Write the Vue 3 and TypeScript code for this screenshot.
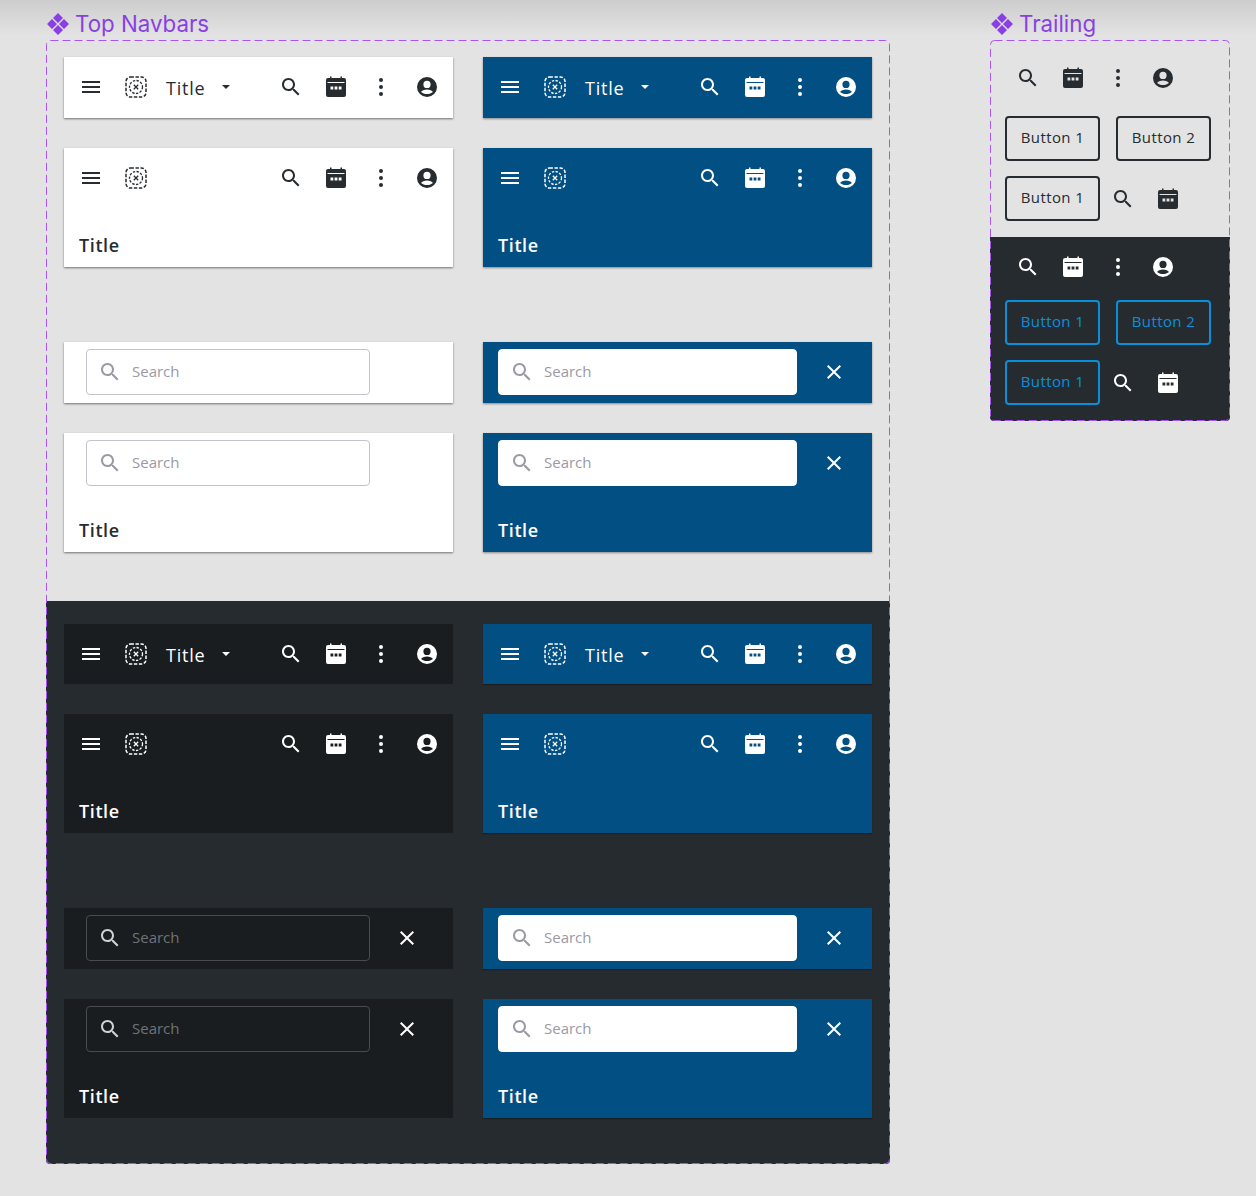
<script setup lang="ts">
import { h } from 'vue'

type IconName = 'menu' | 'search' | 'calendar' | 'dots' | 'account' | 'close'
type Theme = 'light' | 'blue' | 'dark'
interface Bar {
  theme: Theme
  tall?: boolean
  search?: boolean
  close?: boolean
  dropdown?: boolean
  short?: boolean
}

const paths: Record<IconName, string> = {
  menu: 'M3 18h18v-2H3v2zm0-5h18v-2H3v2zm0-7v2h18V6H3z',
  search:
    'M15.5 14h-.79l-.28-.27C15.41 12.59 16 11.11 16 9.5 16 5.91 13.09 3 9.5 3S3 5.91 3 9.5 5.91 16 9.5 16c1.61 0 3.09-.59 4.23-1.57l.27.28v.79l5 4.99L20.49 19l-4.99-5zm-6 0C7.01 14 5 11.99 5 9.5S7.01 5 9.5 5 14 7.01 14 9.5 11.99 14 9.5 14z',
  calendar:
    'M4 3h2V1.5h1.5V3h9V1.5H18V3h2a2 2 0 0 1 2 2v15a2 2 0 0 1-2 2H4a2 2 0 0 1-2-2V5a2 2 0 0 1 2-2zM3.5 7v.9h17V7zM6.5 11.5v3h2.8v-3zM10.6 11.5v3h2.8v-3zM14.7 11.5v3h2.8v-3z',
  dots: 'M12 3a2 2 0 1 1 0 4 2 2 0 0 1 0-4zM12 10a2 2 0 1 1 0 4 2 2 0 0 1 0-4zM12 17a2 2 0 1 1 0 4 2 2 0 0 1 0-4z',
  account:
    'M12 2a10 10 0 1 1 0 20 10 10 0 0 1 0-20zM12 5.8a3.6 3.6 0 1 0 0 7.2 3.6 3.6 0 0 0 0-7.2zM12 14.6c-2.6 0-5.2 1-5.9 2.4 1.4 1.3 3.5 2.1 5.9 2.1s4.5-.8 5.9-2.1c-.7-1.4-3.3-2.4-5.9-2.4z',
  close:
    'M19 6.41L17.59 5 12 10.59 6.41 5 5 6.41 10.59 12 5 17.59 6.41 19 12 13.41 17.59 19 19 17.59 13.41 12z',
}

const Icon = (props: { name: IconName }) =>
  h('svg', { width: 24, height: 24, viewBox: '0 0 24 24', fill: 'currentColor', style: 'flex:none;display:block' }, [
    h('path', { d: paths[props.name], 'fill-rule': 'evenodd' }),
  ])
Icon.props = ['name']

const Placeholder = () =>
  h('svg', { width: 24, height: 24, viewBox: '0 0 24 24', fill: 'none', stroke: 'currentColor', style: 'flex:none;display:block' }, [
    h('rect', { x: 2, y: 2, width: 20, height: 20, rx: 4.5, 'stroke-width': 1.5, 'stroke-dasharray': '3.4 1.6' }),
    h('circle', { cx: 12, cy: 12, r: 6.5, 'stroke-width': 1.3, 'stroke-dasharray': '2.4 1.4' }),
    h('path', { d: 'M9.8 9.8l4.4 4.4M14.2 9.8l-4.4 4.4', 'stroke-width': 1.3 }),
  ])

const groups: Bar[][][] = [
  [
    [
      [
        { theme: 'light', dropdown: true },
        { theme: 'blue', dropdown: true },
      ],
      [
        { theme: 'light', tall: true },
        { theme: 'blue', tall: true },
      ],
    ],
    [
      [
        { theme: 'light', search: true },
        { theme: 'blue', search: true, close: true },
      ],
      [
        { theme: 'light', search: true, tall: true },
        { theme: 'blue', search: true, close: true, tall: true },
      ],
    ],
  ],
  [
    [
      [
        { theme: 'dark', dropdown: true, short: true },
        { theme: 'blue', dropdown: true, short: true },
      ],
      [
        { theme: 'dark', tall: true },
        { theme: 'blue', tall: true },
      ],
    ],
    [
      [
        { theme: 'dark', search: true, close: true },
        { theme: 'blue', search: true, close: true },
      ],
      [
        { theme: 'dark', search: true, close: true, tall: true },
        { theme: 'blue', search: true, close: true, tall: true },
      ],
    ],
  ],
] as Bar[][][]

const actions: IconName[] = ['search', 'calendar', 'dots', 'account']
const trailing = ['trail-light', 'trail-dark']
</script>

<template>
  <div class="page">
    <section class="left">
      <header class="head">
        <svg class="diamonds" width="22" height="22" viewBox="0 0 22 22" fill="currentColor">
          <path d="M11 0l5 5-5 5-5-5zM5 6l5 5-5 5-5-5zM17 6l5 5-5 5-5-5zM11 12l5 5-5 5-5-5z" />
        </svg>
        <span>Top Navbars</span>
      </header>
      <div class="panel main-panel">
        <div
          v-for="(section, s) in groups"
          :key="s"
          class="section"
          :class="s === 0 ? 'section-light' : 'section-dark'"
        >
          <div v-for="(group, g) in section" :key="g" class="group">
            <template v-for="(row, r) in group" :key="r">
              <div
                v-for="(bar, b) in row"
                :key="b"
                class="bar"
                :class="[bar.theme, { tall: bar.tall, short: bar.short }]"
              >
                <div v-if="bar.search" class="row" :class="{ 'row-inset': bar.theme !== 'blue' }">
                  <div class="field">
                    <Icon name="search" />
                    <span>Search</span>
                  </div>
                  <Icon v-if="bar.close" name="close" class="close" />
                </div>
                <div v-else class="row">
                  <Icon name="menu" />
                  <Placeholder class="logo" />
                  <template v-if="bar.dropdown">
                    <span class="inline-title">Title</span>
                    <span class="caret"></span>
                  </template>
                  <div class="actions">
                    <Icon v-for="a in actions" :key="a" :name="a" />
                  </div>
                </div>
                <div v-if="bar.tall" class="big-title">Title</div>
              </div>
            </template>
          </div>
        </div>
        <svg class="outline" width="844" height="1124" viewBox="0 0 844 1124" fill="none">
          <rect x="0.5" y="0.5" width="843" height="1123" rx="4" />
        </svg>
      </div>
    </section>

    <section class="right">
      <header class="head">
        <svg class="diamonds" width="22" height="22" viewBox="0 0 22 22" fill="currentColor">
          <path d="M11 0l5 5-5 5-5-5zM5 6l5 5-5 5-5-5zM17 6l5 5-5 5-5-5zM11 12l5 5-5 5-5-5z" />
        </svg>
        <span>Trailing</span>
      </header>
      <div class="panel side-panel">
        <div v-for="t in trailing" :key="t" class="trail" :class="t">
          <div class="trail-icons">
            <Icon v-for="a in actions" :key="a" :name="a" />
          </div>
          <div class="btn-row">
            <button class="btn">Button 1</button>
            <button class="btn">Button 2</button>
          </div>
          <div class="btn-row mixed">
            <button class="btn">Button 1</button>
            <Icon name="search" class="mixed-search" />
            <Icon name="calendar" class="mixed-calendar" />
          </div>
        </div>
        <svg class="outline" width="240" height="381" viewBox="0 0 240 381" fill="none">
          <rect x="0.5" y="0.5" width="239" height="380" rx="4" />
        </svg>
      </div>
    </section>
  </div>
</template>

<style>
html,
body {
  margin: 0;
  background: #e3e3e3;
}
</style>

<style scoped>
.page {
  width: 1256px;
  height: 1196px;
  display: flex;
  overflow: hidden;
  padding-left: 46px;
  box-sizing: border-box;
  background: linear-gradient(#cdcdcd 0, #e3e3e3 36px);
  font-family: "Open Sans", "Liberation Sans", sans-serif;
}
.left {
  width: 844px;
  flex: none;
}
.right {
  width: 240px;
  flex: none;
  margin-left: 100px;
}
.head {
  height: 40px;
  box-sizing: border-box;
  padding-top: 12px;
  display: flex;
  align-items: flex-start;
  gap: 7px;
  color: #8a3fe3;
  font-family: Inter, "Liberation Sans", sans-serif;
  font-size: 22.3px;
  line-height: 24px;
}
.diamonds {
  flex: none;
  margin: 1px 0 0 1px;
}
.head span {
  margin-left: -1px;
}
.panel {
  position: relative;
}
.outline {
  position: absolute;
  inset: 0;
  pointer-events: none;
}
.outline rect {
  stroke: #a855f7;
  stroke-width: 1;
  stroke-dasharray: 8 4;
}
.section {
  box-sizing: border-box;
  padding-left: 18px;
  display: flex;
  flex-direction: column;
  gap: 75px;
}
.section-light {
  height: 561px;
  padding-top: 17px;
}
.section-dark {
  height: 563px;
  padding-top: 23px;
  background: #262b2f;
  border-radius: 0 0 4px 4px;
}
.group {
  display: grid;
  grid-template-columns: 389px 389px;
  gap: 30px;
}
.bar {
  height: 61px;
  box-sizing: border-box;
}
.bar.short {
  height: 60px;
}
.bar.tall {
  height: 119px;
}
.bar.light {
  background: #fff;
  color: #272c30;
  box-shadow: 0 1px 2px rgba(0, 0, 0, 0.5);
}
.bar.blue {
  background: #025083;
  color: #fff;
  box-shadow: 0 1px 2px rgba(0, 0, 0, 0.4);
}
.bar.dark {
  background: #191d1f;
  color: #fff;
}
.section-dark .bar.blue {
  box-shadow: 0 1px 1px rgba(0, 0, 0, 0.3);
}
.row {
  height: 60px;
  box-sizing: border-box;
  padding: 0 14.5px 0 15px;
  display: flex;
  align-items: center;
}
.row-inset {
  padding-left: 22px;
}
.logo {
  margin-left: 21px;
}
.inline-title {
  margin: 1px 0 0 18px;
  font-size: 18px;
  font-weight: 500;
  line-height: 24px;
  letter-spacing: 0.8px;
}
.caret {
  width: 0;
  height: 0;
  margin-left: 16px;
  border-left: 4px solid transparent;
  border-right: 4px solid transparent;
  border-top: 4px solid currentColor;
}
.actions {
  margin-left: auto;
  display: flex;
  gap: 21.2px;
}
.big-title {
  padding: 25px 0 0 15px;
  font-size: 18px;
  line-height: 24px;
  font-weight: 600;
  letter-spacing: 0.6px;
}
.field {
  width: 299px;
  height: 46px;
  flex: none;
  box-sizing: border-box;
  padding-left: 10.5px;
  display: flex;
  align-items: center;
  gap: 10.5px;
  border: 1px solid #c4c2cc;
  border-radius: 4px;
  background: #fff;
  color: #9a9aa5;
  font-size: 15px;
}
.field span {
  margin-bottom: 2px;
}
.row-inset .field {
  width: 284px;
}
.bar.blue .field {
  border-color: #fff;
}
.bar.dark .field {
  background: #191d1f;
  border-color: #484c50;
  color: #6f7378;
}
.bar.dark .field svg {
  color: #d2d2d2;
}
.close {
  margin-left: 25px;
}
.side-panel {
  width: 240px;
  height: 381px;
}
.trail {
  box-sizing: border-box;
  padding-left: 15px;
}
.trail-light {
  height: 197px;
  padding-top: 26px;
  color: #272c30;
}
.trail-dark {
  height: 184px;
  padding-top: 18px;
  background: #262b2f;
  color: #fff;
  border-radius: 0 0 4px 4px;
}
.trail-icons {
  display: flex;
  gap: 21.2px;
  padding-left: 10.5px;
}
.btn-row {
  display: flex;
  gap: 16px;
  margin-top: 15px;
  align-items: center;
}
.trail-light .trail-icons + .btn-row {
  margin-top: 26px;
}
.trail-dark .trail-icons + .btn-row {
  margin-top: 21px;
}
.btn {
  width: 95px;
  height: 45px;
  padding: 0 0 3px;
  box-sizing: border-box;
  background: transparent;
  border: 2px solid #272c30;
  border-radius: 4px;
  color: #272c30;
  font-family: "Open Sans", "Liberation Sans", sans-serif;
  font-size: 15px;
  font-weight: 500;
  letter-spacing: 0.4px;
}
.trail-dark .btn {
  border-color: #0a8fdc;
  color: #0a8fdc;
}
.mixed .mixed-search {
  margin-left: -5px;
}
.mixed .mixed-calendar {
  margin-left: 5px;
}
</style>
